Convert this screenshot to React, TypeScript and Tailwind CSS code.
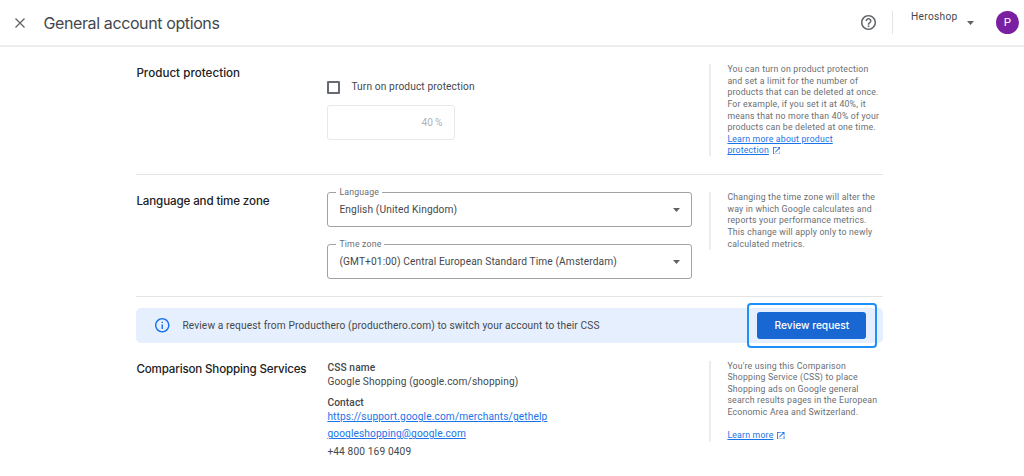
import type { ReactNode } from "react";

const display = "font-['Inter','Liberation_Sans',sans-serif]";

function Section({ title, titleClass, children, aside, className }: {
  title: string;
  titleClass: string;
  children: ReactNode;
  aside: ReactNode;
  className: string;
}) {
  return (
    <section className={`flex items-start ${className}`}>
      <h2 className={`${display} w-[191px] shrink-0 whitespace-nowrap text-[11.6px] leading-[16px] font-medium text-[#202124] ${titleClass}`}>
        {title}
      </h2>
      <div className="w-[365px] shrink-0">{children}</div>
      {aside}
    </section>
  );
}

function Aside({ children, className }: { children: ReactNode; className: string }) {
  return (
    <aside className={`ml-[17px] shrink-0 whitespace-nowrap border-l-2 border-[#ebecee] pl-[16px] text-[8.72px] leading-[11.64px] tracking-[0.2px] text-[#6a6e73] ${className}`}>
      {children}
    </aside>
  );
}

function ExternalIcon() {
  return (
    <svg viewBox="3 3 18 18" className="ml-[1.5px] inline size-[7.5px] align-[-1px] text-[#1a73e8]" fill="currentColor" aria-hidden="true">
      <path d="M19 19H5V5h7V3H3v18h18v-9h-2v7zM14 3v2h3.59l-9.83 9.83 1.41 1.41L19 6.41V10h2V3h-7z" />
    </svg>
  );
}

function Caret({ className }: { className: string }) {
  return (
    <svg viewBox="0 0 8 4" className={`h-[4px] w-[7px] ${className}`} fill="#5f6368" preserveAspectRatio="none" aria-hidden="true">
      <path d="M0 0h8L4 4z" />
    </svg>
  );
}

function SelectField({ label, value, valueClass }: { label: string; value: string; valueClass: string }) {
  return (
    <div className="relative flex h-[35px] items-center justify-between rounded-[3px] border border-[#a0a3a6] pr-[11px] pl-[11px]">
      <span className="absolute -top-[6px] left-[8px] bg-white px-[3px] text-[8.72px] leading-[11px] tracking-[0.18px] text-[#6a6e73]">{label}</span>
      <span className={`text-[10.18px] leading-[14px] text-[#44484c] ${valueClass}`}>{value}</span>
      <Caret className="" />
    </div>
  );
}

export default function App() {
  return (
    <div className="h-[476px] w-[1024px] overflow-hidden bg-white font-['Roboto','Liberation_Sans',sans-serif] text-[#44484c]">
      <header className="flex h-[47px] items-center border-b-2 border-[#ececed]">
        <svg viewBox="0 0 10 10" className="ml-[15px] size-[10px]" stroke="#5f6368" strokeWidth="1.3" aria-hidden="true">
          <path d="M.5.5l9 9M9.5.5l-9 9" />
        </svg>
        <h1 className={`${display} ml-[18.5px] text-[16px] leading-[22px] tracking-[-0.39px] text-[#44484c]`}>General account options</h1>
        <div className="ml-auto flex h-full items-center">
          <svg viewBox="2 2 20 20" className="size-[15px]" fill="#5f6368" aria-hidden="true">
            <path d="M11 18h2v-2h-2v2zm1-16C6.48 2 2 6.48 2 12s4.48 10 10 10 10-4.48 10-10S17.52 2 12 2zm0 18c-4.41 0-8-3.59-8-8s3.59-8 8-8 8 3.59 8 8-3.59 8-8 8zm0-14c-2.21 0-4 1.79-4 4h2c0-1.1.9-2 2-2s2 .9 2 2c0 2-3 1.75-3 5h2c0-2.25 3-2.5 3-5 0-2.21-1.79-4-4-4z" />
          </svg>
          <div className="ml-4 h-[23px] w-px bg-[#e3e4e6]" />
          <span className="mb-[11px] ml-[18px] w-[47px] whitespace-nowrap text-[10.18px] leading-[14px] tracking-[0.3px]">Heroshop</span>
          <Caret className="ml-[8.5px]" />
          <span className="ml-[22.5px] mr-[5px] flex size-[23px] items-center justify-center rounded-full bg-[#7b1fa2] text-[11.5px] leading-none text-white">P</span>
        </div>
      </header>

      <main className="ml-[136.4px] w-[747px]">
        <Section
          title="Product protection"
          titleClass="pt-[17.5px] tracking-[0.03px]"
          className="h-[128px] border-b border-[#e3e4e5]"
          aside={
            <Aside className="mt-[17px] h-[92px]">
              You can turn on product protection<br />
              and set a limit for the number of<br />
              products that can be deleted at once.<br />
              For example, if you set it at 40%, it<br />
              means that no more than 40% of your<br />
              products can be deleted at one time.<br />
              <a className="text-[#1a73e8] underline">Learn more about product<br />protection</a> <ExternalIcon />
            </Aside>
          }
        >
          <div className="flex items-center pt-[33px]">
            <span className="size-[13px] rounded-[1px] border-2 border-[#666b72]" />
            <span className="ml-[11px] text-[10.18px] leading-[14px] tracking-[0.12px]">Turn on product protection</span>
          </div>
          <div className="mt-[11px] flex h-[35px] w-[128px] items-center justify-end rounded-[3px] border border-[#e8e8e9] pr-[12px] text-[10.18px] text-[#b0b2b4]">
            <span>40</span>
            <span className="ml-[2px]">%</span>
          </div>
        </Section>

        <Section
          title="Language and time zone"
          titleClass="pt-[18px] tracking-[-0.13px]"
          className="h-[122px] border-b border-[#e3e4e5]"
          aside={
            <Aside className="mt-[17px] h-[58px]">
              Changing the time zone will alter the<br />
              way in which Google calculates and<br />
              reports your performance metrics.<br />
              This change will apply only to newly<br />
              calculated metrics.
            </Aside>
          }
        >
          <div className="flex flex-col gap-[17px] pt-[17px]">
            <SelectField label="Language" value="English (United Kingdom)" valueClass="tracking-[0.13px]" />
            <SelectField label="Time zone" value="(GMT+01:00) Central European Standard Time (Amsterdam)" valueClass="tracking-[0.12px]" />
          </div>
        </Section>

        <div className="mt-[11px] flex h-[35px] items-center rounded-[5px] bg-[#e6effe] pl-[19px]">
          <svg viewBox="2 2 20 20" className="size-[14.5px]" fill="#1a73e8" aria-hidden="true">
            <path d="M11 7h2v2h-2zm0 4h2v6h-2zm1-9C6.48 2 2 6.48 2 12s4.48 10 10 10 10-4.48 10-10S17.52 2 12 2zm0 18c-4.41 0-8-3.59-8-8s3.59-8 8-8 8 3.59 8 8-3.59 8-8 8z" />
          </svg>
          <span className="ml-[12.5px] text-[10.18px] leading-[14px] tracking-[0.12px]">
            Review a request from Producthero (producthero.com) to switch your account to their CSS
          </span>
          <div className="-my-[5px] mr-[6px] ml-auto rounded-[4px] border-2 border-[#1e90fc] py-[7px] pr-[9px] pl-2">
            <button className={`${display} block h-[27px] w-[109px] rounded-[3px] bg-[#1967d2] text-[10.18px] leading-[27px] font-medium whitespace-nowrap text-white`}>
              Review request
            </button>
          </div>
        </div>

        <Section
          title="Comparison Shopping Services"
          titleClass="pt-[18px] tracking-[-0.17px]"
          className=""
          aside={
            <Aside className="mt-[17.5px] h-[81px]">
              You&apos;re using this Comparison<br />
              Shopping Service (CSS) to place<br />
              Shopping ads on Google general<br />
              search results pages in the European<br />
              Economic Area and Switzerland.<br />
              <br />
              <a className="text-[#1a73e8] underline">Learn more</a> <ExternalIcon />
            </Aside>
          }
        >
          <dl className="pt-[17.5px] text-[10.18px] leading-[14.5px] tracking-[0.12px]">
            <dt className="font-medium">CSS name</dt>
            <dd>Google Shopping (google.com/shopping)</dd>
            <dt className="mt-[6px] font-medium">Contact</dt>
            <dd><a className="text-[#1a73e8] underline">https://support.google.com/merchants/gethelp</a></dd>
            <dd className="mt-[2.8px]"><a className="text-[#1a73e8] underline">googleshopping@google.com</a></dd>
            <dd className="mt-[3px]">+44 800 169 0409</dd>
          </dl>
        </Section>
      </main>
    </div>
  );
}
